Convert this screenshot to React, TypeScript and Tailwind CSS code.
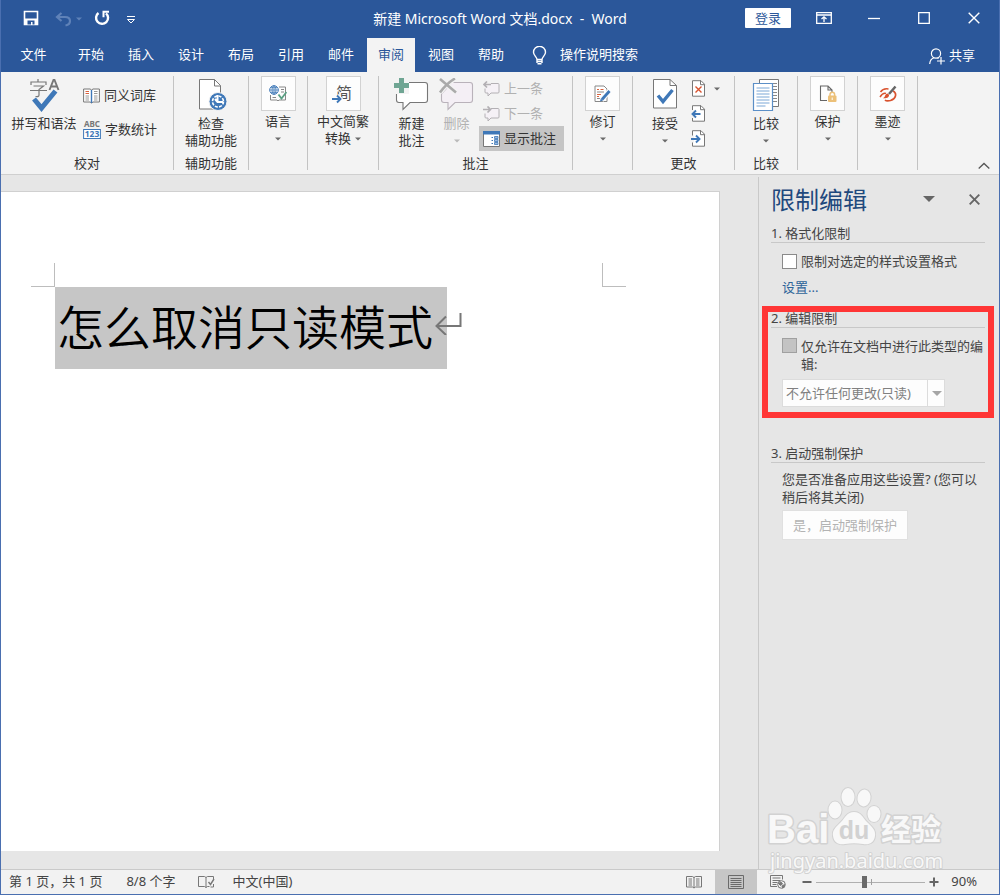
import type { ReactNode } from "react";

const FONT = "font-['Noto_Sans','Noto_Sans_CJK_SC',sans-serif]";

function Caret({ className = "fill-[#6a6a6a]" }: { className?: string }) {
  return (
    <svg width="6" height="4" viewBox="0 0 6 4" className={"inline-block " + className}>
      <path d="M0 .5h6L3 3.5z" />
    </svg>
  );
}

/* ---------- title bar ---------- */

function CaptionButton({ label, children }: { label: string; children: ReactNode }) {
  return (
    <button aria-label={label} className="flex h-9 w-[50px] items-center justify-center">
      {children}
    </button>
  );
}

function TitleBar() {
  return (
    <header className="grid h-9 grid-cols-[1fr_auto_1fr] items-center bg-[#2b579a] text-white">
      <div className="flex items-center pl-[22px]">
        <button aria-label="保存" className="w-4">
          <svg width="16" height="16" viewBox="0 0 16 16" fill="none">
            <path d="M1.500 1.500h13v13h-13z" stroke="#fff" strokeWidth="1.600" />
            <path d="M1 8.500h14v6.500H1z" fill="#fff" />
            <path d="M4.500 10.500h7v4h-2v-2.500H8v2.500H4.500z" fill="#2b579a" />
          </svg>
        </button>
        <button aria-label="撤消" className="ml-4 flex w-7 items-center gap-1 pt-[2px]">
          <svg width="17" height="15" viewBox="0 0 17 15" fill="none" stroke="#5f82b8" strokeWidth="2.200">
            <path d="M6.500 1 2 5l4.500 4M2.500 5H10c3 0 5 1.500 5 4s-2 4-4.500 4.500" />
          </svg>
          <Caret className="shrink-0 fill-[#5f82b8]" />
        </button>
        <button aria-label="重复" className="ml-[11px] w-4">
          <svg width="16" height="16" viewBox="0 0 16 16" fill="none" stroke="#fff" strokeWidth="2.400">
            <path d="M4.500 3A6 6 0 1 0 12 3.300" />
            <path d="M15 1.800H9.500v5.500" strokeWidth="2" />
          </svg>
        </button>
        <button aria-label="自定义快速访问工具栏" className="ml-4 w-3 pt-[3px]">
          <svg width="10" height="8" viewBox="0 0 10 8" fill="none" stroke="#fff">
            <path d="M1 .5h8" />
            <path d="M1.500 3.500h7L5 7z" />
          </svg>
        </button>
      </div>
      <h1 className="whitespace-pre text-[14px]">新建 Microsoft Word 文档.docx  -  Word</h1>
      <div className="flex items-center justify-end">
        <button className="mr-2 h-5 w-[46px] rounded-[1px] bg-white text-[13px] leading-5 text-[#2b579a]">登录</button>
        <CaptionButton label="功能区显示选项">
          <svg width="16" height="12" viewBox="0 0 16 12" fill="none" stroke="#fff" strokeWidth="1.300">
            <path d="M.7.7h14.600v10.600H.7zM.7 3h14.600M8 10V5M5.500 7 8 4.800 10.500 7" />
          </svg>
        </CaptionButton>
        <CaptionButton label="最小化">
          <svg width="12" height="12" viewBox="0 0 12 12" stroke="#fff" strokeWidth="1.300">
            <path d="M0 6.500h12" />
          </svg>
        </CaptionButton>
        <CaptionButton label="最大化">
          <svg width="12" height="12" viewBox="0 0 12 12" fill="none" stroke="#fff" strokeWidth="1.300">
            <path d="M.7.7h10.600v10.600H.7z" />
          </svg>
        </CaptionButton>
        <CaptionButton label="关闭">
          <svg width="12" height="12" viewBox="0 0 12 12" stroke="#fff" strokeWidth="1.400">
            <path d="m.7.7 10.600 10.600M11.300.7.7 11.300" />
          </svg>
        </CaptionButton>
      </div>
    </header>
  );
}

/* ---------- tabs ---------- */

const tabs = ["开始", "插入", "设计", "布局", "引用", "邮件", "审阅", "视图", "帮助"];

function TabBar() {
  return (
    <nav className="flex h-9 items-end bg-[#2b579a] text-[13px] text-white">
      <button className="h-[34px] w-[65px]">文件</button>
      {tabs.map((t) => (
        <button
          key={t}
          className={t === "审阅" ? "mx-px h-[34px] w-12 bg-[#f3f3f3] text-[#2b579a]" : "mx-px h-[34px] w-12"}
        >
          {t}
        </button>
      ))}
      <button className="ml-4 flex h-[34px] items-center gap-[13px]">
        <svg width="15" height="19" viewBox="0 0 15 19" fill="none" stroke="#fff" strokeWidth="1.400">
          <path d="M5 13.500c0-2.500-3.500-4-3.500-7.200a6 6 0 0 1 12 0c0 3.200-3.500 4.700-3.500 7.200zM5 15.500h5M5.500 17.800h4M5 13v4M10 13v4" />
        </svg>
        操作说明搜索
      </button>
      <button className="mr-6 ml-auto flex h-8 items-center gap-1">
        <svg width="16" height="17" viewBox="0 0 16 17" fill="none" stroke="#fff" strokeWidth="1.200">
          <circle cx="7" cy="5.500" r="4.600" />
          <path d="M.7 16c.3-3.600 2-5.500 4.300-6.200M8.500 10l1 .6M12 9v7.500M8 13h8" />
        </svg>
        共享
      </button>
    </nav>
  );
}

/* ---------- ribbon ---------- */

function Group({ width, label, children }: { width: string; label?: string; children: ReactNode }) {
  return (
    <section className={"flex h-[94px] shrink-0 flex-col justify-between border-r border-[#c3c3c3] " + width}>
      {children}
      {label && <div className="text-center leading-[14px]">{label}</div>}
    </section>
  );
}

function BigButton({
  icon,
  lines,
  caret,
  muted,
  className = "w-full",
}: {
  icon: ReactNode;
  lines: string[];
  caret?: boolean;
  muted?: boolean;
  className?: string;
}) {
  return (
    <button className={"flex flex-col items-center leading-[17px] whitespace-nowrap " + className}>
      <span className="flex h-[39px] items-start justify-center pt-[2px]">{icon}</span>
      {lines.map((l) => (
        <span key={l} className={muted ? "text-[#b1b1b1]" : ""}>
          {l}
        </span>
      ))}
      {caret && (
        <span className="flex h-[17px] items-center">
          <Caret className={muted ? "fill-[#b9b9b9]" : "fill-[#6a6a6a]"} />
        </span>
      )}
    </button>
  );
}

function BoxButton({ icon, lines, inlineCaret }: { icon: ReactNode; lines: string[]; inlineCaret?: boolean }) {
  return (
    <button className="flex w-full flex-col items-center leading-[17px] whitespace-nowrap">
      <span className="mb-[2px] flex h-[35px] w-[35px] items-center justify-center border border-[#d2d2d2] bg-[#fdfdfd]">
        {icon}
      </span>
      {lines.map((l, i) => (
        <span key={l} className="flex items-center gap-1">
          {l}
          {inlineCaret && i === lines.length - 1 && <Caret />}
        </span>
      ))}
      {!inlineCaret && (
        <span className="flex h-[17px] items-center">
          <Caret />
        </span>
      )}
    </button>
  );
}

function SpellIcon() {
  return (
    <svg width="32" height="35" viewBox="0 0 32 35" fill="none">
      <path
        d="M10 1v2.500M3 7V4h15v3M5.500 8h10L11 11.500V17c0 1.500-.8 1.700-3.500 1.500M2 12.500h17"
        stroke="#777"
        strokeWidth="1.200"
      />
      <path d="m21.500 12 4-10h1l4 10M23 8.500h6" stroke="#777" strokeWidth="1.900" />
      <path d="m6 21 7.500 9L27.500 13" stroke="#3f78b8" strokeWidth="5" />
    </svg>
  );
}

function ThesaurusIcon() {
  return (
    <svg width="17" height="16" viewBox="0 0 17 16" fill="none">
      <path d="M.6 1h6.500l1.400 1L10 1h6.400v13H10l-1.500 1-1.400-1H.6z" fill="#fff" stroke="#777" />
      <path d="M8.500 2v13" stroke="#3f78b8" strokeWidth="1.400" />
      <path d="M2.500 3.500H6M2.500 5.500H6" stroke="#d9633f" />
      <path d="M2.500 8H6M2.500 10H6M2.500 12H6M11 3.500h3.500M11 5.500h3.500M11 8h3.500M11 10h3.500M11 12h3.500" stroke="#999" />
    </svg>
  );
}

function CountIcon() {
  return (
    <svg width="18" height="20" viewBox="0 0 18 20">
      <text x="9" y="7" textAnchor="middle" fontSize="8" fontWeight="700" fill="#777" fontFamily="Noto Sans">
        ABC
      </text>
      <rect x=".6" y="9.500" width="16.800" height="9" fill="#fff" stroke="#3f78b8" />
      <text x="9" y="17" textAnchor="middle" fontSize="8.500" fontWeight="700" fill="#3f78b8" fontFamily="Noto Sans">
        123
      </text>
    </svg>
  );
}

function AccessibilityIcon() {
  return (
    <svg width="33" height="33" viewBox="-3 0 33 33" fill="none">
      <path d="M1.500 1.500h15l6 6V31h-21z" fill="#fff" stroke="#777" />
      <path d="M16.500 1.500V8h6" stroke="#777" />
      <circle cx="20" cy="23.500" r="9" fill="#3f78b8" stroke="#f3f3f3" />
      <circle cx="20" cy="23.500" r="5.500" stroke="#fff" strokeWidth="1.600" strokeDasharray="3 1.300" />
      <path d="M19.500 17v7M17 21l2.500 3H25" stroke="#fff" strokeWidth="2" />
    </svg>
  );
}

function LanguageIcon() {
  return (
    <svg width="18" height="17" viewBox="0 0 18 17" fill="none">
      <path d="M10 2h6.500v13H10l-1 1-1-1H1.500v-5" stroke="#888" />
      <path d="M3.500 12.500H7M12 4.500h3M12 7h3" stroke="#888" />
      <circle cx="5" cy="5" r="4.300" fill="#fff" stroke="#3f78b8" />
      <path d="M.7 5h8.600M5 .7v8.600M2 2.700h6M2 7.300h6" stroke="#3f78b8" strokeWidth=".8" />
      <ellipse cx="5" cy="5" rx="2" ry="4.300" stroke="#3f78b8" strokeWidth=".8" />
      <path d="m9.500 9.500 3 4L17.500 7" stroke="#5a9f83" strokeWidth="1.800" />
    </svg>
  );
}

function ConvertIcon() {
  return (
    <svg width="24" height="26" viewBox="0 0 24 26" fill="none">
      <text x="5" y="18" fontSize="16" fill="#555" fontFamily="Noto Sans CJK SC">
        简
      </text>
      <path d="M2 18h7M6 14.500 9.500 18 6 21.500" stroke="#fdfdfd" strokeWidth="4" />
      <path d="M1 18h8M6 14.500 9.500 18 6 21.500" stroke="#3f78b8" strokeWidth="1.900" />
    </svg>
  );
}

function CommentNewIcon() {
  return (
    <svg width="38" height="34" viewBox="0 0 38 34" fill="none">
      <path d="M5 4.500h27q2.500 0 2.500 2.500v15q0 2.500-2.500 2.500H17l-7 7v-7H6q-2.500 0-2.500-2.500V7z" fill="#fff" stroke="#777" strokeWidth="1.100" />
      <path d="M1 0h15v16H1z" fill="#f3f3f3" />
      <path d="M6 0h5v5h5v5h-5v5H6v-5H1V5h5z" fill="#6fa593" />
    </svg>
  );
}

function CommentDeleteIcon() {
  return (
    <svg width="38" height="34" viewBox="0 0 38 34" fill="none">
      <path d="M14 4.500h18q2.500 0 2.500 2.500v15q0 2.500-2.500 2.500H17l-7 7v-7H6q-2.500 0-2.500-2.500v-6z" fill="#f4eff5" stroke="#b9b2ba" strokeWidth="1.100" />
      <path d="m2 1 16 13.500M17 .5C11 4 6 9 2 14.500" stroke="#f3f3f3" strokeWidth="5" />
      <path d="m2 1 16 13.500M17 .5C11 4 6 9 2 14.500" stroke="#aaa" strokeWidth="2.600" />
    </svg>
  );
}

function CommentStepIcon({ next }: { next?: boolean }) {
  return (
    <svg width="17" height="16" viewBox="0 0 17 16" fill="none" stroke="#b3b0b4">
      <path d="M8 2.500h7q1 0 1 1V11q0 1-1 1H8l-3 3v-3H3q-1 0-1-1V7.500" fill="#f5f1f6" />
      {next ? (
        <path d="M0 3.500h7M4.500.5l3 3-3 3" strokeWidth="1.700" />
      ) : (
        <path d="M1 3.500h7M4 .5l-3 3 3 3" strokeWidth="1.700" />
      )}
    </svg>
  );
}

function ShowCommentsIcon() {
  return (
    <svg width="17" height="16" viewBox="0 0 17 16" fill="none">
      <path d="M.5.5h16v15H.5z" fill="#fff" stroke="#777" />
      <path d="M0 0h17v3.500H0z" fill="#3f78b8" />
      <path d="M8.500 6.500h1.500M8.500 9.500h1.500M8.500 12.500h1.500" stroke="#3f78b8" />
      <path d="M11.500 5.500H15v2h-3.500zM11.500 8.500H15v2h-3.500zM11.500 11.500H15v2h-3.500z" fill="#9dbbe0" stroke="#3f78b8" strokeWidth=".8" />
    </svg>
  );
}

function TrackIcon() {
  return (
    <svg width="17" height="18" viewBox="0 0 17 18" fill="none">
      <path d="M1 1h9l3 3v12.500H1z" fill="#fff" stroke="#888" />
      <path d="M3 4.500h2M6.500 4.500h3M3 9.500h4M3 11.500h2" stroke="#d9633f" strokeWidth="1.200" />
      <path d="M3 7h7M3 13.500h3" stroke="#888" />
      <path d="m15.500 6-8 9" stroke="#fdfdfd" strokeWidth="5" />
      <path d="m15.500 6-7.500 8.500" stroke="#3f78b8" strokeWidth="2.800" />
      <path d="m6 16.500.8-3 2.200 2z" fill="#3f78b8" />
    </svg>
  );
}

function AcceptIcon() {
  return (
    <svg width="26" height="31" viewBox="0 0 26 31" fill="none">
      <path d="M1.500 1.500H18l6.500 6V30h-23z" fill="#fff" stroke="#777" />
      <path d="M18 1.500v6h6.500" stroke="#777" />
      <path d="m6 17.500 5 6 9.500-11.500" stroke="#3f78b8" strokeWidth="3.400" />
    </svg>
  );
}

function PageMark({ kind }: { kind: "reject" | "prev" | "next" }) {
  return (
    <svg width="15" height="17" viewBox="0 0 15 17" fill="none">
      <path d="M1.500.7H10l3.500 3.500v12h-12z" fill="#fff" stroke="#777" />
      <path d="M9.500.7v4h4" stroke="#777" />
      {kind === "reject" && <path d="m4.500 6.500 6 6M10.500 6.500l-6 6" stroke="#d9532f" strokeWidth="1.400" />}
      {kind === "prev" && (
        <>
          <path d="M0 5h4v8H0z" fill="#f3f3f3" />
          <path d="M9.500 9H1.500M5 5.500 1.500 9 5 12.500" stroke="#3f78b8" strokeWidth="1.900" />
        </>
      )}
      {kind === "next" && (
        <>
          <path d="M0 5.500h3v7H0z" fill="#f3f3f3" />
          <path d="M0 9h8.500M5 5.500 8.500 9 5 12.500" stroke="#3f78b8" strokeWidth="1.900" />
        </>
      )}
    </svg>
  );
}

function CompareIcon() {
  return (
    <svg width="28" height="34" viewBox="0 0 28 34" fill="none">
      <path d="M7.500 1.500h19v27h-19z" fill="#fff" stroke="#777" />
      <path d="M21 5.500h4M21 8.500h4M21 11.500h4M21 14.500h4M21 17.500h4M21 20.500h4M21 23.500h4" stroke="#888" />
      <path d="M1.500 5.500h19v27h-19z" fill="#fff" stroke="#5b8fc7" strokeWidth="1.200" />
      <path d="M4.500 10h13M4.500 13h13M4.500 16h13M4.500 19h13M4.500 22h13M4.500 25h13M4.500 28h9" stroke="#7ba7d6" />
    </svg>
  );
}

function ProtectIcon() {
  return (
    <svg width="18" height="18" viewBox="0 0 18 18" fill="none">
      <path d="M8 15.500H1.500V1H9l4 4v2.500M9 1v4h4" stroke="#666" strokeWidth="1.100" />
      <path d="M11 11V9.500a2.300 2.300 0 0 1 4.600 0V11" stroke="#ecc078" strokeWidth="1.500" />
      <rect x="9" y="10.500" width="8.500" height="6.500" rx="1" fill="#ecc078" />
      <path d="M13.200 12.500v2.500" stroke="#fff" />
    </svg>
  );
}

function InkIcon() {
  return (
    <svg width="18" height="18" viewBox="0 0 18 18" fill="none">
      <path d="M1.500 7c2-3 5-3.500 8-3" stroke="#d9532f" strokeWidth="1.500" />
      <path d="M14 6c4 2 3.500 7.500-2.500 9.500-2.500.7-4.500.5-5.500-.5" stroke="#d9532f" strokeWidth="1.700" />
      <path d="M1 12c2-3 4.500-4 6-3.500" stroke="#d9532f" strokeWidth="1.500" />
      <path d="m16.500 1.500-6.500 7.500" stroke="#666" strokeWidth="2.500" />
      <path d="M8.500 8.500c1.800.7 2 2.200.8 3.500-1.300 1.300-3.800 1.500-5.300 1.300 1.600-.8 1.800-1.800 2.300-3 .5-1 1.200-1.600 2.200-1.800z" fill="#d9532f" />
    </svg>
  );
}

function Ribbon() {
  return (
    <div className="flex items-start border-b border-[#cfcfcf] bg-[#f3f3f3] pt-1 pb-1 text-[13px] text-[#333]">
      <Group width="w-[173px]" label="校对">
        <div className="flex pl-[10px]">
          <BigButton className="w-[66px]" icon={<SpellIcon />} lines={["拼写和语法"]} />
          <div className="flex flex-col pt-[3px] pl-[6px]">
            <button className="flex h-[34px] items-center gap-1">
              <ThesaurusIcon />
              同义词库
            </button>
            <button className="flex h-[34px] items-center gap-1">
              <CountIcon />
              字数统计
            </button>
          </div>
        </div>
      </Group>
      <Group width="w-[75px]" label="辅助功能">
        <BigButton icon={<AccessibilityIcon />} lines={["检查", "辅助功能"]} />
      </Group>
      <Group width="w-[59px]">
        <BoxButton icon={<LanguageIcon />} lines={["语言"]} />
      </Group>
      <Group width="w-[71px]">
        <BoxButton icon={<ConvertIcon />} lines={["中文简繁", "转换"]} inlineCaret />
      </Group>
      <Group width="w-[194px]" label="批注">
        <div className="flex pl-[10px]">
          <BigButton className="w-[45px]" icon={<CommentNewIcon />} lines={["新建", "批注"]} />
          <BigButton className="w-[45px]" icon={<CommentDeleteIcon />} lines={["删除"]} caret muted />
          <div className="flex w-[85px] flex-col">
            <button className="flex h-[25px] items-center gap-1 pl-1 text-[#b1b1b1]">
              <CommentStepIcon />
              上一条
            </button>
            <button className="flex h-[25px] items-center gap-1 pl-1 text-[#b1b1b1]">
              <CommentStepIcon next />
              下一条
            </button>
            <button aria-pressed="true" className="flex h-[25px] items-center gap-1 bg-[#c5c5c5] pl-1">
              <ShowCommentsIcon />
              显示批注
            </button>
          </div>
        </div>
      </Group>
      <Group width="w-[60px]">
        <BoxButton icon={<TrackIcon />} lines={["修订"]} />
      </Group>
      <Group width="w-[102px]" label="更改">
        <div className="flex pl-[10px]">
          <BigButton className="w-[44px]" icon={<AcceptIcon />} lines={["接受"]} caret />
          <div className="flex flex-col pl-1">
            <button aria-label="拒绝" className="flex h-[25px] items-center gap-2">
              <PageMark kind="reject" />
              <Caret />
            </button>
            <button aria-label="上一处" className="flex h-[25px] items-center">
              <PageMark kind="prev" />
            </button>
            <button aria-label="下一处" className="flex h-[25px] items-center">
              <PageMark kind="next" />
            </button>
          </div>
        </div>
      </Group>
      <Group width="w-[63px]" label="比较">
        <BigButton icon={<CompareIcon />} lines={["比较"]} caret />
      </Group>
      <Group width="w-[60px]">
        <BoxButton icon={<ProtectIcon />} lines={["保护"]} />
      </Group>
      <Group width="w-[60px]">
        <BoxButton icon={<InkIcon />} lines={["墨迹"]} />
      </Group>
      <button aria-label="折叠功能区" className="mr-[9px] ml-auto self-end">
        <svg width="12" height="8" viewBox="0 0 12 8" fill="none" stroke="#555" strokeWidth="1.300">
          <path d="m.7 6.500 5.300-5 5.300 5" />
        </svg>
      </button>
    </div>
  );
}

/* ---------- document ---------- */

function DocumentArea() {
  return (
    <main className="flex flex-1 flex-col pt-4 pr-[38px] pb-[18px]">
      <article className="flex-1 border-t border-r border-[#d0d0d0] bg-white pt-[71px]">
        <div className="flex justify-between pr-[93px] pl-[30px]">
          <div className="h-6 w-6 border-r border-b border-[#bdbdbd]" />
          <div className="h-6 w-6 border-b border-l border-[#bdbdbd]" />
        </div>
        <p className="flex pl-[54px] text-[47px] leading-[82px] font-[350] text-black">
          <span className="h-[82px] w-[392px] bg-[#c6c6c6] pl-[2px] leading-[80px] whitespace-nowrap">怎么取消只读模式</span>
          <svg width="28" height="24" viewBox="0 0 28 24" fill="none" stroke="#777" strokeWidth="2" className="-ml-3 mt-6">
            <path d="M25.500 2v13H2M11 5.500 1.500 15l9.500 9" />
          </svg>
        </p>
      </article>
    </main>
  );
}

/* ---------- restrict editing pane ---------- */

function PaneHeading({ children }: { children: ReactNode }) {
  return <h3 className="h-[18px] border-b border-[#c8c8c8] leading-[17px]">{children}</h3>;
}

function RestrictPane() {
  return (
    <aside className="mt-[2px] w-[241px] shrink-0 border-l border-[#c9c9c9] pr-[14px] pl-3 text-[13px] leading-[18px] text-[#444]">
      <div className="flex h-[47px] items-start pt-[6px]">
        <h2 className="text-[24px] leading-[34px] text-[#1f497d]">限制编辑</h2>
        <button aria-label="任务窗格选项" className="mr-[34px] ml-auto flex h-8 items-center">
          <svg width="12" height="6" viewBox="0 0 12 6" fill="#666">
            <path d="M0 0h12L6 6z" />
          </svg>
        </button>
        <button aria-label="关闭窗格" className="mr-[5px] flex h-8 items-center">
          <svg width="11" height="11" viewBox="0 0 11 11" stroke="#666" strokeWidth="1.900">
            <path d="m.7.7 9.600 9.600M10.300.7.7 10.300" />
          </svg>
        </button>
      </div>

      <section className="mt-[1px]">
        <PaneHeading>1. 格式化限制</PaneHeading>
        <label className="mt-[9px] flex items-center gap-1 pl-[11px] whitespace-nowrap">
          <input type="checkbox" className="h-[15px] w-[15px] shrink-0 appearance-none border border-[#8a8a8a] bg-white" />
          限制对选定的样式设置格式
        </label>
        <a href="#styles" className="mt-2 block pl-[11px] text-[#2e6499]">
          设置...
        </a>
      </section>

      <section className="relative mt-[14px]">
        <PaneHeading>2. 编辑限制</PaneHeading>
        <label className="mt-[9px] flex items-start gap-1 pl-[11px]">
          <input
            type="checkbox"
            disabled
            className="mt-px h-[15px] w-[15px] shrink-0 appearance-none border border-[#a0a0a0] bg-[#c3c3c3]"
          />
          <span className="w-[186px] shrink-0">仅允许在文档中进行此类型的编辑:</span>
        </label>
        <div className="relative mt-[6px] ml-[11px] w-[163px]">
          <select
            aria-label="编辑限制类型"
            disabled
            className="block h-7 w-full appearance-none border border-[#dcdcdc] bg-[#fdfdfd] pl-[3px] text-[13px] text-[#808080] opacity-100"
          >
            <option>不允许任何更改(只读)</option>
          </select>
          <span className="pointer-events-none absolute inset-y-0 right-0 flex w-[18px] items-center justify-center border-l border-[#dcdcdc]">
            <svg width="10" height="5" viewBox="0 0 10 5" fill="#a6a6a6">
              <path d="M0 0h10L5 5z" />
            </svg>
          </span>
        </div>
        <div className="pointer-events-none absolute -top-1 -right-[9px] -bottom-[11px] -left-[9px] border-6 border-[#ff3636]" />
      </section>

      <section className="mt-[38px]">
        <PaneHeading>3. 启动强制保护</PaneHeading>
        <p className="mt-[7px] w-[212px] pl-[11px]">您是否准备应用这些设置? (您可以稍后将其关闭)</p>
        <button disabled className="mt-1 ml-[11px] h-[30px] w-[126px] border border-[#e0e0e0] bg-[#fdfdfd] text-[#b3b3b3]">
          是，启动强制保护
        </button>
      </section>
    </aside>
  );
}

/* ---------- watermark ---------- */

function Watermark() {
  return (
    <svg
      width="184"
      height="92"
      viewBox="0 0 184 92"
      className="pointer-events-none absolute right-[49px] bottom-[18px]"
      fill="#f8f8f8"
      stroke="#d2d2d2"
      strokeWidth="2"
      strokeLinejoin="round"
    >
      <g style={{ paintOrder: "stroke" }}>
        <text x="1" y="59" fontSize="40" fontWeight="700" fontFamily="Liberation Sans" strokeWidth="3">
          Bai
        </text>
        <text x="115" y="56" fontSize="30" fontWeight="700" fontFamily="Noto Sans CJK SC" strokeWidth="3">
          经验
        </text>
        <text x="4" y="84" fontSize="20" fontFamily="Noto Sans" strokeWidth="2">
          jingyan.baidu.com
        </text>
        <path d="M88 28c-7 0-9 6-13 10-5 5-9 8-8 14 1 7 6 9 12 8 6-1 12-1 18 0 6 1 11-1 12-8 1-6-3-9-8-14-4-4-6-10-13-10z" />
        <ellipse cx="69" cy="26" rx="6.500" ry="8.500" />
        <ellipse cx="82" cy="13" rx="6.500" ry="9" />
        <ellipse cx="98" cy="14" rx="6.500" ry="8.500" transform="rotate(10 98 14)" />
        <ellipse cx="108" cy="30" rx="6.500" ry="8" />
      </g>
      <text x="88" y="55" textAnchor="middle" fontSize="25" fontWeight="700" fontFamily="Liberation Sans" fill="#d2d2d2" stroke="none">
        du
      </text>
    </svg>
  );
}

/* ---------- status bar ---------- */

function ReadIcon() {
  return (
    <svg width="16" height="14" viewBox="0 0 16 14" fill="none" stroke="#777">
      <path d="M.5 1.500h6l1.500 1 1.500-1h6v10.500h-6L8 13l-1.500-1h-6zM8 2v11M2.500 4h3.500M2.500 6h3.500M2.500 8h3.500M2.500 10h3.500M10 4h3.500M10 6h3.500M10 8h3.500M10 10h3.500" />
    </svg>
  );
}

function StatusBar() {
  return (
    <footer className="flex h-[25px] items-center border-t border-[#c9c9c9] bg-[#f2f2f2] pl-2 text-[13px] text-[#444]">
      <span>第 1 页，共 1 页</span>
      <span className="ml-6">8/8 个字</span>
      <button aria-label="校对" className="ml-[22px]">
        <svg width="17" height="14" viewBox="0 0 17 14" fill="none" stroke="#777">
          <path d="M15.500 4V1.500h-6L8 2.500l-1.500-1h-6v10h6l1.500 1 1.500-1h2M8 2.500v10M15.500 9v3h-3" />
          <path d="m10.500 7 2 2.500L16 4" strokeWidth="1.400" />
        </svg>
      </button>
      <span className="ml-[18px]">中文(中国)</span>
      <div className="ml-auto flex h-full items-center">
        <button aria-label="阅读视图" className="mr-[13px]">
          <ReadIcon />
        </button>
        <button aria-label="页面视图" aria-pressed="true" className="flex h-full w-[42px] items-center justify-center bg-[#c6c6c6]">
          <svg width="16" height="14" viewBox="0 0 16 14" fill="none" stroke="#6a6a6a">
            <path d="M.5.5h15v13H.5zM2.500 3.500h11M2.500 5.500h11M2.500 7.500h11M2.500 9.500h11M2.500 11.500h11" />
          </svg>
        </button>
        <button aria-label="Web 版式视图" className="ml-[13px]">
          <svg width="16" height="14" viewBox="0 0 16 14" fill="none" stroke="#777">
            <path d="M7 11.500H.5V.5h12v4M2.500 3h8M2.500 5.500h8M2.500 7.500h5M2.500 9.500h4" />
            <circle cx="11.500" cy="9.500" r="3.800" fill="#f2f2f2" />
            <path d="M8.500 8.500 11 7l1.500 2-2 1.500zM12 11l2.500-1.500-.5 2.500-1.500 1z" fill="#777" />
          </svg>
        </button>
        <button aria-label="缩小" className="ml-4">
          <svg width="10" height="10" viewBox="0 0 10 10" stroke="#666" strokeWidth="2">
            <path d="M.5 5h9" />
          </svg>
        </button>
        <div className="relative mx-1 flex h-4 w-[109px] items-center">
          <span className="absolute top-[5px] left-1/2 h-[6px] w-px bg-[#a0a0a0]" />
          <input
            type="range"
            aria-label="缩放"
            min={10}
            max={170}
            defaultValue={80}
            className="h-4 w-full appearance-none bg-transparent [&::-webkit-slider-runnable-track]:h-px [&::-webkit-slider-runnable-track]:bg-[#b0b0b0] [&::-webkit-slider-thumb]:-mt-[6px] [&::-webkit-slider-thumb]:h-3 [&::-webkit-slider-thumb]:w-[5px] [&::-webkit-slider-thumb]:appearance-none [&::-webkit-slider-thumb]:bg-[#6a6a6a]"
          />
        </div>
        <button aria-label="放大">
          <svg width="10" height="10" viewBox="0 0 10 10" stroke="#666" strokeWidth="2">
            <path d="M.5 5h9M5 .5v9" />
          </svg>
        </button>
        <span className="mr-[22px] ml-3">90%</span>
      </div>
    </footer>
  );
}

export default function App() {
  return (
    <div
      lang="zh-CN"
      className={"relative flex min-h-screen flex-col border-x border-b border-[#4a6fb0] bg-[#e6e6e6] " + FONT}
    >
      <TitleBar />
      <TabBar />
      <Ribbon />
      <div className="flex flex-1">
        <DocumentArea />
        <RestrictPane />
      </div>
      <StatusBar />
      <Watermark />
    </div>
  );
}
